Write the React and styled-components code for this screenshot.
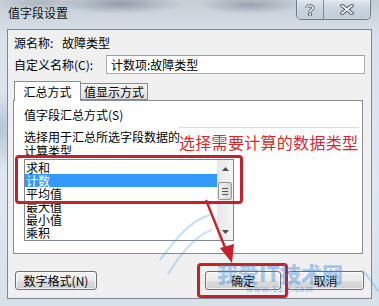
import React from 'react'
import styled, { createGlobalStyle } from 'styled-components'

const Global = createGlobalStyle`
  html, body { margin: 0; padding: 0; }
  body {
    width: 379px;
    height: 306px;
    overflow: hidden;
    font-family: "Noto Sans CJK SC", "Noto Sans", sans-serif;
    font-size: 12px;
    color: #000;
  }
`

const Frame = styled.div`
  position: relative;
  width: 379px;
  height: 306px;
  box-sizing: border-box;
  display: flex;
  flex-direction: column;
  overflow: hidden;
  background:
    radial-gradient(ellipse 60px 10px at 120px 4px, rgba(90,100,115,0.45), transparent),
    radial-gradient(ellipse 50px 9px at 250px 5px, rgba(90,100,115,0.4), transparent),
    radial-gradient(ellipse 40px 8px at 40px 3px, rgba(120,130,140,0.3), transparent),
    radial-gradient(ellipse 30px 40px at 0px 130px, rgba(120,150,180,0.4), transparent),
    linear-gradient(180deg, #c4ccd4 0%, #d9e2ea 12%, #dfe8f0 60%, #d6e1ea 100%);
`

const TitleBar = styled.div`
  height: 29px;
  display: flex;
  align-items: flex-start;
  justify-content: space-between;
  padding: 0 8px 0 8px;
`

const Title = styled.div`
  padding-top: 5px;
  font-size: 12px;
  line-height: 16px;
  color: #111;
`

const Caption = styled.div`
  display: flex;
  height: 19px;
  border: 1px solid #6f7c8a;
  border-top: none;
  border-radius: 0 0 5px 5px;
  overflow: hidden;
  box-shadow: inset 0 0 0 1px rgba(255,255,255,0.45);
`

const CapButton = styled.div`
  width: ${p => p.w}px;
  display: flex;
  align-items: center;
  justify-content: center;
  background: linear-gradient(180deg, rgba(235,240,246,0.7) 0%, rgba(200,212,224,0.7) 50%, rgba(185,200,214,0.7) 100%);
  & + & { border-left: 1px solid #7d8a97; }
`

const Client = styled.div`
  flex: 1;
  margin: 0 7px 7px 7px;
  border: 1px solid #7c8894;
  background: #f0f0f0;
  display: flex;
  flex-direction: column;
  padding: 5px 6px 0 6px;
`

const Row = styled.div`
  display: flex;
  align-items: center;
  height: ${p => p.h}px;
  margin-top: ${p => p.mt || 0}px;
`

const Label = styled.span`
  width: ${p => p.w}px;
  flex: none;
  white-space: nowrap;
`

const Input = styled.div`
  flex: 1;
  height: 19px;
  box-sizing: border-box;
  border: 1px solid #abadb3;
  border-top-color: #9a9ea6;
  background: #fff;
  padding: 0 4px;
  line-height: 17px;
`

const TabArea = styled.div`
  margin: 7px 2px 0 -1px;
  display: flex;
  flex-direction: column;
`

const TabStrip = styled.div`
  display: flex;
  align-items: flex-end;
  height: 19px;
  padding-left: 1px;
  position: relative;
  z-index: 1;
`

const Tab = styled.div`
  box-sizing: border-box;
  height: ${p => (p.active ? 20 : 17)}px;
  margin-bottom: ${p => (p.active ? -1 : 0)}px;
  width: ${p => p.w}px;
  border: 1px solid #898c95;
  border-bottom: ${p => (p.active ? 'none' : '1px solid #898c95')};
  ${p => !p.active && 'border-left: none;'}
  background: ${p => (p.active ? '#fff' : 'linear-gradient(180deg, #f4f4f4 0%, #ebebeb 50%, #dcdcdc 100%)')};
  display: flex;
  align-items: center;
  justify-content: center;
  line-height: 16px;
`

const Panel = styled.div`
  height: 154px;
  box-sizing: border-box;
  border: 1px solid #898c95;
  background: #fff;
  padding: 7px 10px 0 10px;
  display: flex;
  flex-direction: column;
`

const PanelText = styled.div`
  line-height: 14px;
  margin-bottom: ${p => p.mb || 0}px;
`

const ListBox = styled.div`
  width: 210px;
  height: 82px;
  box-sizing: border-box;
  border: 1px solid #828790;
  background: #fff;
  display: flex;
  margin-top: 1px;
`

const Items = styled.div`
  flex: 1;
  padding-top: 1px;
  overflow: hidden;
`

const Item = styled.div`
  height: 13px;
  line-height: 13px;
  padding-left: 1px;
  white-space: nowrap;
  background: ${p => (p.selected ? '#3399ff' : 'transparent')};
  color: ${p => (p.selected ? '#fff' : '#000')};
`

const ScrollBar = styled.div`
  width: 16px;
  background: linear-gradient(90deg, #e8e8e8, #f4f4f4);
  display: flex;
  flex-direction: column;
  align-items: center;
`

const Arrow = styled.div`
  height: ${p => p.h}px;
  display: flex;
  align-items: center;
  justify-content: center;
  width: 100%;
`

const Thumb = styled.div`
  width: 14px;
  height: 18px;
  box-sizing: border-box;
  border: 1px solid #959595;
  border-radius: 2px;
  background: linear-gradient(90deg, #f3f3f3, #e4e4e4 50%, #d8d8d8);
  display: flex;
  flex-direction: column;
  align-items: center;
  justify-content: center;
  gap: 2px;
  margin-top: 5px;
  & i { display: block; width: 6px; height: 1px; background: #555; }
`

const Track = styled.div`
  flex: 1;
`

const ButtonRow = styled.div`
  display: flex;
  margin-top: 17px;
  padding-left: 1px;
  gap: 6px;
`

const Button = styled.div`
  width: ${p => p.w}px;
  height: 19px;
  box-sizing: border-box;
  border: 1px solid #707070;
  border-radius: 3px;
  background: linear-gradient(180deg, #f2f2f2 0%, #ebebeb 50%, #dddddd 51%, #cfcfcf 100%);
  display: flex;
  align-items: center;
  justify-content: center;
  line-height: 16px;
  margin-left: ${p => p.ml || 0}px;
  box-shadow: inset 0 0 0 1px rgba(255,255,255,0.7);
`

const Overlay = styled.div`
  position: absolute;
  left: ${p => p.x}px;
  top: ${p => p.y}px;
  width: ${p => p.w}px;
  height: ${p => p.h}px;
  pointer-events: none;
`

const RedBox = styled(Overlay)`
  box-sizing: border-box;
  border: 3px solid #c2222a;
  border-radius: 4px;
`

const Note = styled(Overlay)`
  box-sizing: border-box;
  border-top: 1px solid #dcdcdc;
  padding-top: 5px;
  font-size: 16px;
  line-height: 18px;
  color: #d8282e;
  white-space: nowrap;
  letter-spacing: 0.3px;
`

const Mark = styled(Overlay)`
  font-family: "Noto Sans CJK SC", sans-serif;
  font-weight: 900;
  font-size: 21px;
  line-height: 22px;
  color: rgba(40,130,225,0.4);
  white-space: nowrap;
  text-align: center;
  & small {
    display: block;
    font-size: 8px;
    line-height: 9px;
    font-weight: 700;
    letter-spacing: 1px;
  }
`

const items = ['求和', '计数', '平均值', '最大值', '最小值', '乘积']

export default function App() {
  return (
    <>
      <Global />
      <Frame>
        <TitleBar>
          <Title>值字段设置</Title>
          <Caption>
            <CapButton w={26}>
              <svg width="10" height="12" viewBox="0 0 10 12">
                <path d="M2 4 C2 1, 8 1, 8 4 C8 6, 5 6, 5 8" fill="none" stroke="#4a5563" strokeWidth="3.2" />
                <path d="M2 4 C2 1, 8 1, 8 4 C8 6, 5 6, 5 8" fill="none" stroke="#eef2f6" strokeWidth="1.6" />
                <rect x="3.5" y="9" width="3" height="3" fill="#eef2f6" stroke="#4a5563" strokeWidth="0.8" />
              </svg>
            </CapButton>
            <CapButton w={46}>
              <svg width="14" height="11" viewBox="0 0 14 11">
                <path d="M2 1.5 L12 9.5 M12 1.5 L2 9.5" stroke="#4a5563" strokeWidth="3.6" strokeLinecap="round" />
                <path d="M2 1.5 L12 9.5 M12 1.5 L2 9.5" stroke="#eef2f6" strokeWidth="1.8" strokeLinecap="round" />
              </svg>
            </CapButton>
          </Caption>
        </TitleBar>
        <Client>
          <Row h={14}>
            <Label w={48}>源名称:</Label>
            <span>故障类型</span>
          </Row>
          <Row h={19} mt={6}>
            <Label w={92}>自定义名称(C):</Label>
            <Input>计数项:故障类型</Input>
          </Row>
          <TabArea>
            <TabStrip>
              <Tab active w={67}>汇总方式</Tab>
              <Tab w={67}>值显示方式</Tab>
            </TabStrip>
            <Panel>
              <PanelText mb={8}>值字段汇总方式(S)</PanelText>
              <PanelText>选择用于汇总所选字段数据的</PanelText>
              <PanelText>计算类型</PanelText>
              <ListBox>
                <Items>
                  {items.map((t, i) => (
                    <Item key={t} selected={i === 1}>{t}</Item>
                  ))}
                </Items>
                <ScrollBar>
                  <Arrow h={17}>
                    <svg width="7" height="4" viewBox="0 0 7 4"><path d="M0 4 L3.5 0 L7 4 Z" fill="#4d4d4d" /></svg>
                  </Arrow>
                  <Thumb><i /><i /><i /></Thumb>
                  <Track />
                  <Arrow h={17}>
                    <svg width="7" height="4" viewBox="0 0 7 4"><path d="M0 0 L3.5 4 L7 0 Z" fill="#4d4d4d" /></svg>
                  </Arrow>
                </ScrollBar>
              </ListBox>
            </Panel>
          </TabArea>
          <ButtonRow>
            <Button w={82}>数字格式(N)</Button>
            <Button w={76} ml={102}>确定</Button>
            <Button w={77}>取消</Button>
          </ButtonRow>
        </Client>

        <Note x={179} y={127} w={180} h={26}>选择需要计算的数据类型</Note>
        <RedBox x={15} y={155} w={228} h={49} />
        <Overlay x={150} y={190} w={229} h={116}>
          <svg width="229" height="116" viewBox="0 0 229 116">
            <path d="M10 70 C 25 50, 40 30, 60 25" fill="none" stroke="rgba(70,160,230,0.35)" strokeWidth="2" />
            <path d="M18 84 C 30 65, 45 45, 62 40" fill="none" stroke="rgba(70,160,230,0.3)" strokeWidth="2" />
            <path d="M212 80 C 222 90, 226 100, 229 102" fill="none" stroke="rgba(70,160,230,0.35)" strokeWidth="2" />
            <path d="M56 10 L78 65" stroke="#c8202a" strokeWidth="2.4" />
            <path d="M70 58 L82 73 L84 54 Z" fill="#c8202a" />
          </svg>
        </Overlay>
        <RedBox x={197} y={263} w={91} h={35} />
        <Mark x={210} y={262} w={140} h={36}>
          我爱IT技术网
          <small>www.52ij.com</small>
        </Mark>
      </Frame>
    </>
  )
}
